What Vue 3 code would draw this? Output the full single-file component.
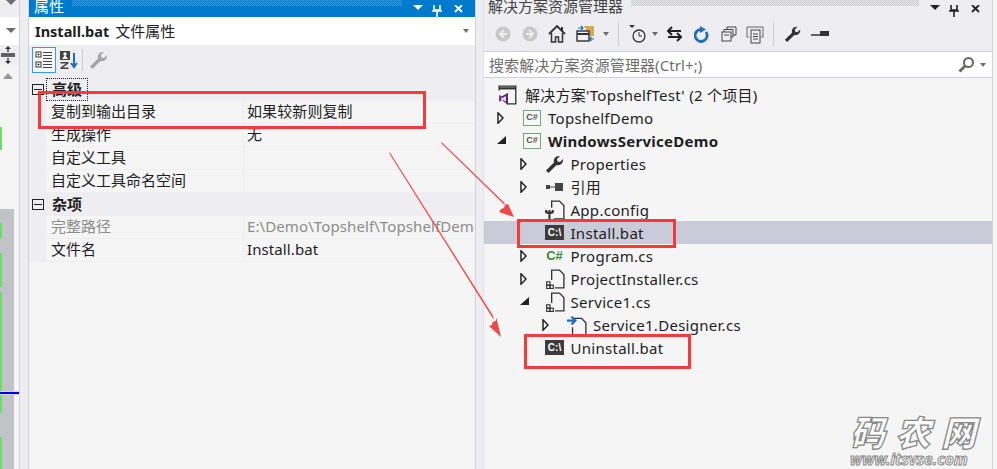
<script setup>
const mapSegments = [
  { h: 85, c: 'transparent' }, { h: 42, c: '#f5f5f5' }, { h: 23, c: 'green' }, { h: 59, c: '#f5f5f5' },
  { h: 14, c: 'gray' }, { h: 15, c: 'green' }, { h: 15, c: 'gray' }, { h: 34, c: 'green' }, { h: 5, c: 'gray' },
  { h: 121, c: 'green' }, { h: 24, c: 'gray' }, { h: 32, c: 'green' }
]
const propGroups = [
  { name: '高级', focus: true, rows: [
    { k: '复制到输出目录', v: '如果较新则复制' }, { k: '生成操作', v: '无' },
    { k: '自定义工具', v: '' }, { k: '自定义工具命名空间', v: '' } ] },
  { name: '杂项', rows: [
    { k: '完整路径', v: 'E:\\Demo\\Topshelf\\TopshelfDemo\\WindowsServiceDemo\\Install.bat', dim: true },
    { k: '文件名', v: 'Install.bat' } ] }
]
const tree = [
  { t: "解决方案'TopshelfTest' (2 个项目)", icon: 'sln', solution: true, d: 0 },
  { t: 'TopshelfDemo', icon: 'proj', arrow: 'o', d: 0 },
  { t: 'WindowsServiceDemo', icon: 'proj', arrow: 'f', d: 0, bold: true },
  { t: 'Properties', icon: 'wrench', arrow: 'o', d: 1 },
  { t: '引用', icon: 'ref', arrow: 'o', d: 1 },
  { t: 'App.config', icon: 'config', d: 1 },
  { t: 'Install.bat', icon: 'cmd', d: 1, sel: true },
  { t: 'Program.cs', icon: 'cs', arrow: 'o', d: 1 },
  { t: 'ProjectInstaller.cs', icon: 'comp', arrow: 'o', d: 1 },
  { t: 'Service1.cs', icon: 'comp', arrow: 'f', d: 1 },
  { t: 'Service1.Designer.cs', icon: 'des', arrow: 'o', d: 2 },
  { t: 'Uninstall.bat', icon: 'cmd', d: 1 }
]
</script>

<template>
  <div class="root">
    <aside class="strip">
      <div class="strip-main">
        <div class="s-top"><i class="tri"></i></div>
        <div class="s-combo"><i class="tri"></i></div>
        <div class="s-split">
          <svg width="16" height="18" viewBox="0 0 16 18"><path d="M1 8h14M1 10h14" stroke="#333" stroke-width="1.4"/><path d="M8 1v5M8 12v5" stroke="#333" stroke-width="1.4"/><path d="M5 3l3-3 3 3zM5 15l3 3 3-3z" fill="#333"/></svg>
        </div>
        <div class="s-map">
          <i class="tri up"></i>
          <div v-for="(s, i) in mapSegments" :key="i" class="seg" :class="s.c === 'green' ? 'seg-green' : s.c === 'gray' ? 'seg-gray' : ''" :style="{ height: s.h + 'px' }"></div>
        </div>
      </div>
      <div class="strip-bar"></div>
      <div class="caret-line"></div>
    </aside>

    <section class="props">
      <header class="title blue">
        <span class="title-text">属性</span>
        <span class="grip"></span>
        <span class="win-btns">
          <svg width="60" height="12" viewBox="0 0 60 12"><path d="M5 0h10l-5 5z" fill="#fff"/><path d="M26 0v5h6V0M24 6h10M29 6v6" stroke="#fff" stroke-width="1.6" fill="none"/><path d="M47 0l7 7M54 0l-7 7" stroke="#fff" stroke-width="1.8"/></svg>
        </span>
      </header>
      <div class="file-head">
        <b>Install.bat</b><span>文件属性</span>
        <i class="tri small"></i>
      </div>
      <div class="p-tools">
        <button class="tool on">
          <svg width="18" height="18" viewBox="0 0 18 18"><rect x="1" y="1" width="5" height="5" fill="#fff" stroke="#333"/><path d="M2.5 3.5h2M3.5 2.5v2" stroke="#333"/><rect x="1" y="11" width="5" height="5" fill="#fff" stroke="#333"/><path d="M2.5 13.5h2M3.5 12.5v2" stroke="#333"/><path d="M8 1.5h9M8 4.5h9M8 7.5h9M8 10.5h9M8 13.5h9M8 16.5h9" stroke="#444"/></svg>
        </button>
        <span class="tool plain">
          <svg width="19" height="20" viewBox="0 0 19 20"><rect x="1" y="1" width="10" height="9" fill="#444"/><circle cx="6" cy="4" r="1.7" fill="#fff"/><path d="M3 9l3-4 3 4z" fill="#fff"/><path d="M1.5 12h8v1.5l-5.5 4h5.5v1.5h-8v-1.500l5.500-4h-5.500z" fill="#444"/><path d="M15 3v14M12 13l3 4 3-4" stroke="#1c6fb8" stroke-width="2" fill="none"/></svg>
        </span>
        <span class="tsep"></span>
        <span class="tool plain wr">
          <svg width="20" height="20" viewBox="0 0 20 20"><path d="M1 16.500L9 8.500C8 5 10.500 1.500 15 2l-3 3 .5 2.500L15 8l3-3c.5 4.500-3 7-6.500 6l-8 8z" fill="#a6a6a6"/></svg>
        </span>
      </div>
      <template v-for="g in propGroups" :key="g.name">
        <div class="group">
          <span class="minus"></span>
          <span class="g-name" :class="{ focus: g.focus }">{{ g.name }}</span>
        </div>
        <div v-for="r in g.rows" :key="r.k" class="prop-row">
          <span class="k" :class="{ dim: r.dim }">{{ r.k }}</span>
          <span class="v" :class="{ dim: r.dim }">{{ r.v }}</span>
        </div>
      </template>
    </section>

    <div class="gutter"></div>

    <section class="explorer">
      <header class="title light">
        <span class="title-text">解决方案资源管理器</span>
        <span class="grip dark"></span>
        <span class="win-btns">
          <svg width="60" height="12" viewBox="0 0 60 12"><path d="M5 0h10l-5 5z" fill="#222"/><path d="M26 0v5h6V0M24 6h10M29 6v6" stroke="#222" stroke-width="1.6" fill="none"/><path d="M47 0l7 7M54 0l-7 7" stroke="#222" stroke-width="1.8"/></svg>
        </span>
      </header>
      <div class="e-tools">
        <svg class="e-ico back" width="16" height="16" viewBox="0 0 16 16"><circle cx="8" cy="8" r="7.500" fill="#c8c8c8"/><path d="M9 4L5 8l4 4M5 8h7" stroke="#eee" stroke-width="1.800" fill="none"/></svg>
        <svg class="e-ico fwd" width="16" height="16" viewBox="0 0 16 16"><circle cx="8" cy="8" r="7.500" fill="#c8c8c8"/><path d="M7 4l4 4-4 4M11 8H4" stroke="#eee" stroke-width="1.800" fill="none"/></svg>
        <svg class="e-ico home" width="18" height="18" viewBox="0 0 18 18"><path d="M1 9l8-8 8 8" fill="none" stroke="#333" stroke-width="1.800"/><path d="M3.500 8v9h4v-5h3v5h4V8" fill="#eeeef2" stroke="#333" stroke-width="1.500"/><rect x="13" y="2" width="2" height="4" fill="#333"/></svg>
        <svg class="e-ico sync" width="19" height="18" viewBox="0 0 19 18"><path d="M8 1h10v10h-5" fill="#d9a84e"/><rect x="1" y="6" width="12" height="10" fill="#eeeef2" stroke="#333" stroke-width="1.400"/><path d="M1 9h12" stroke="#333" stroke-width="2"/><path d="M2 3h5M5 1l2 2-2 2" stroke="#1c6fb8" stroke-width="1.200" fill="none"/><path d="M18 14h-4M15.500 12l-2 2 2 2" stroke="#1c6fb8" stroke-width="1.200" fill="none"/></svg>
        <i class="tri small t1"></i>
        <span class="tsep e1"></span>
        <svg class="e-ico hist" width="17" height="18" viewBox="0 0 17 18"><path d="M0 0h6L3 3z" fill="#333"/><circle cx="10" cy="11" r="6" fill="none" stroke="#333" stroke-width="1.300"/><path d="M10 7v4h3" stroke="#333" fill="none"/></svg>
        <i class="tri small t2"></i>
        <svg class="e-ico swap" width="15" height="16" viewBox="0 0 15 16"><path d="M1 5h13M5 1L1 5l4 4" stroke="#222" stroke-width="2" fill="none"/><path d="M14 11H1M10 7l4 4-4 4" stroke="#222" stroke-width="2" fill="none"/></svg>
        <svg class="e-ico ref" width="15" height="17" viewBox="0 0 15 17"><path d="M12 6a6 6 0 1 1-5.500-2.500" fill="none" stroke="#1c6fb8" stroke-width="2.800"/><path d="M6 0l6 3.500L6 7z" fill="#1c6fb8"/></svg>
        <svg class="e-ico coll" width="16" height="16" viewBox="0 0 16 16"><rect x="1" y="6" width="9" height="9" fill="#eeeef2" stroke="#444"/><path d="M3 6V3.500h9V11h-2M6 3.500V1h9v8h-3" fill="none" stroke="#444"/><path d="M3 9h5" stroke="#444"/></svg>
        <svg class="e-ico paste" width="18" height="19" viewBox="0 0 18 19"><path d="M3 12H1V2h16v10h-2" fill="none" stroke="#666"/><rect x="5" y="5" width="9" height="13" fill="#eeeef2" stroke="#444"/><path d="M7 9h5M7 11.500h5M7 14h5" stroke="#444"/></svg>
        <span class="tsep e2"></span>
        <svg class="e-ico wrench" width="18" height="18" viewBox="0 0 20 20"><path d="M1 16.500L9 8.500C8 5 10.500 1.500 15 2l-3 3 .5 2.500L15 8l3-3c.5 4.500-3 7-6.500 6l-8 8z" fill="#333"/></svg>
        <svg class="e-ico dash" width="18" height="6" viewBox="0 0 18 6"><path d="M0 4h9" stroke="#333" stroke-width="1.500"/><rect x="9" y="0" width="9" height="5" fill="#333"/></svg>
      </div>
      <div class="search">
        <span class="ph">搜索解决方案资源管理器(Ctrl+;)</span>
        <svg class="mag" width="17" height="17" viewBox="0 0 17 17"><circle cx="10.500" cy="6.500" r="4.500" fill="none" stroke="#666" stroke-width="2"/><path d="M7 10l-5.500 5.500" stroke="#666" stroke-width="2.800"/></svg>
        <i class="tri small t3"></i>
      </div>
      <div class="tree">
        <div v-for="n in tree" :key="n.t" class="node" :class="{ sel: n.sel, bold: n.bold, sol: n.solution }" :style="{ paddingLeft: (n.solution ? 14 : 10 + n.d * 22.5) + 'px' }">
          <span class="arrow">
            <svg v-if="n.arrow === 'o'" width="7" height="12" viewBox="0 0 7 12"><path d="M1 .8v10.400L6 6z" fill="#fff" stroke="#222" stroke-width="1.500"/></svg>
            <svg v-else-if="n.arrow === 'f'" width="9" height="9" viewBox="0 0 9 9"><path d="M9 0v8H0z" fill="#222"/></svg>
          </span>
          <span class="icon">
            <svg v-if="n.icon === 'sln'" width="20" height="20" viewBox="0 0 18 18"><path d="M1 5V1h15v16H8" fill="none" stroke="#333" stroke-width="1.200"/><path d="M1 3h15" stroke="#333" stroke-width="2"/><path d="M1 9v6l2-1v-4zM9 7v11l-5-4 0-1 3 2V10L4 12 2 11z" fill="#68217a"/></svg>
            <span v-else-if="n.icon === 'proj'" class="proj">C#</span>
            <svg v-else-if="n.icon === 'wrench'" width="20" height="20" viewBox="0 0 20 20"><path d="M1 16.500L9 8.500C8 5 10.500 1.500 15 2l-3 3 .5 2.500L15 8l3-3c.5 4.500-3 7-6.500 6l-8 8z" fill="#333"/></svg>
            <svg v-else-if="n.icon === 'ref'" width="18" height="8" viewBox="0 0 18 8"><rect x="0" y="2" width="4" height="4" fill="#444"/><path d="M4 4h5" stroke="#444"/><rect x="9" y="0" width="8" height="8" fill="#444"/></svg>
            <svg v-else-if="n.icon === 'config'" width="20" height="20" viewBox="0 0 18 18"><path d="M6 7V1h7l4 4v12H8" fill="none" stroke="#333" stroke-width="1.200"/><path d="M4 9v2.500M4 17v-5.500M1 9v2l3 1 3-1V9" fill="none" stroke="#333" stroke-width="1.900"/></svg>
            <span v-else-if="n.icon === 'cmd'" class="cmd">C:\</span>
            <span v-else-if="n.icon === 'cs'" class="cs">C#</span>
            <svg v-else-if="n.icon === 'comp'" width="20" height="20" viewBox="0 0 18 18"><path d="M6 10V1h7l4 4v12H9" fill="none" stroke="#333" stroke-width="1.200"/><rect x="1.500" y="11.500" width="3" height="3" fill="none" stroke="#333"/><rect x="4.500" y="14.500" width="3" height="3" fill="none" stroke="#333"/><rect x="1.500" y="14.500" width="3" height="3" fill="none" stroke="#333"/></svg>
            <svg v-else-if="n.icon === 'des'" width="20" height="20" viewBox="0 0 18 18"><path d="M6 7V3h7l4 4v11H5V11" fill="none" stroke="#333" stroke-width="1.200"/><path d="M0 5h7M4 1.500L7.500 5 4 8.500" stroke="#1c6fb8" stroke-width="2" fill="none"/></svg>
          </span>
          <span class="label">{{ n.t }}</span>
        </div>
      </div>
    </section>
    <div class="edge"></div>

    <svg class="marks" width="997" height="469" viewBox="0 0 997 469">
      <g fill="none" stroke="#f63a3a" stroke-width="3">
        <rect x="39.500" y="92.500" width="385" height="35"/>
        <rect x="518.500" y="220.500" width="156" height="26"/>
        <rect x="525.500" y="335.500" width="164" height="32"/>
      </g>
      <path d="M441 143l.8-.8 62 60 1.600 3.600zM389 153l.9-.5 103 163 1 4.500z" fill="#f04848"/>
      <path d="M514 217l-15-5 2-3 3-1 1-3 3-1zM501 337l-12-11 3-1 .5-3 3-1 1-3z" fill="#f04848"/>
    </svg>

    <div class="watermark">
      <div class="wm-cn"><span>码</span><span>农</span><span>网</span></div>
      <div class="wm-en">www.itsvse.com</div>
    </div>
  </div>
</template>

<style scoped>
.root { position: relative; width: 997px; height: 469px; overflow: hidden; display: flex; background: #f5f5f5; font: 15px/22px "Noto Sans", "Noto Sans CJK SC", sans-serif; color: #1e1e1e; }
.tri { display: block; width: 0; height: 0; border-left: 5px solid transparent; border-right: 5px solid transparent; border-top: 5px solid #6d6d6d; }
.tri.up { border-top: 0; border-bottom: 6px solid #999; position: absolute; left: 2px; top: 73px; }
.tri.small { border-left-width: 3.500px; border-right-width: 3.500px; border-top-width: 4px; }

.strip { position: relative; width: 29px; flex: none; display: flex; }
.strip-main { width: 19px; flex: none; position: relative; background: #f5f5f5; border-right: 1px solid #cfd0d8; box-sizing: content-box; }
.strip-bar { flex: 1; background: #eeeef2; border-right: 1px solid #cfd0d8; }
.s-top { height: 17px; background: #eeeef2; padding: 0 0 0 6px; box-sizing: border-box; }
.s-combo { height: 28px; background: #fff; padding: 11px 0 0 6px; box-sizing: border-box; }
.s-split { height: 20px; background: #eeeef2; padding: 1px 0 0 0; box-sizing: border-box; }
.s-map { position: absolute; left: 0; top: 0; width: 14px; padding-top: 0; pointer-events: none; }
.s-map .tri.up { left: 3px; }
.seg { width: 100%; }
.seg-gray { background: #c2c3c9; }
.seg-green { background: linear-gradient(90deg, #6cdc6c 0 2px, transparent 2px); }
.seg-green:nth-child(n+6) { background: linear-gradient(90deg, #6cdc6c 0 2px, #c2c3c9 2px); }
.caret-line { position: absolute; left: 0; top: 392px; width: 19px; height: 2px; background: #0000d8; box-shadow: 0 -1px #d5d6e8, 0 1px #d5d6e8; }

.props { width: 447px; flex: none; display: flex; flex-direction: column; border-right: 1px solid #cfd0d8; overflow: hidden; box-sizing: border-box; }
.title { height: 17px; flex: none; display: flex; align-items: flex-end; overflow: hidden; }
.title.blue { background: #007acc; color: #fff; padding-left: 5px; }
.title.light { background: #eeeef2; color: #444; padding-left: 4px; }
.title-text { flex: none; white-space: nowrap; height: 22px; font-size: 15px; line-height: 22px; }
.grip { flex: 1; align-self: flex-start; height: 6px; margin: 0 6px 0 8px; background: repeating-conic-gradient(#3c9ad8 0 25%, transparent 0 50%) 0 0 / 2px 2px; }
.grip.dark { background: repeating-conic-gradient(#c6c6ca 0 25%, transparent 0 50%) 0 0 / 2px 2px; }
.win-btns { flex: none; width: 67px; align-self: flex-start; height: 12px; }
.file-head { height: 28px; flex: none; background: #fff; display: flex; align-items: center; padding: 0 6px 0 6px; gap: 6px; font-size: 15px; }
.file-head b { font-weight: 700; font-size: 14.500px; }
.file-head .tri { margin-left: auto; }
.p-tools { height: 31px; flex: none; background: #eeeef2; display: flex; align-items: flex-start; padding: 2px 0 0 3px; }
.tool { display: flex; align-items: center; justify-content: center; padding: 0; }
.tool.on { width: 24px; height: 26px; border: 1px solid #3399ff; background: #f8f8fb; box-sizing: border-box; }
.tool.plain { width: 24px; height: 26px; }
.tsep { width: 1px; height: 22px; background: #ccced6; margin: 2px 0 0 2px; }
.tool.wr { margin-left: 4px; }
.group { height: 23px; flex: none; background: #eeeef2; display: flex; align-items: center; font-weight: 700; padding-left: 3px; }
.minus { width: 12px; height: 11px; border: 1px solid #222; box-sizing: border-box; margin-right: 2px; flex: none; background: linear-gradient(#222, #222) center / 8px 1px no-repeat; }
.g-name { padding: 0 5px; line-height: 20px; height: 21px; border: 1px solid transparent; }
.g-name.focus { border: 1px dotted #222; }
.prop-row { height: 23px; flex: none; display: flex; background: #eeeef2; padding-left: 17px; box-sizing: border-box; line-height: 20px; }
.k { width: 198px; flex: none; padding-left: 5px; background: #f5f5f5; box-sizing: border-box; border-bottom: 1px solid #eeeef2; border-right: 1px solid #eeeef2; white-space: nowrap; }
.v { flex: 1; padding-left: 3px; background: #f5f5f5; border-bottom: 1px solid #eeeef2; white-space: nowrap; overflow: hidden; letter-spacing: .1px; }
.dim { color: #8c8c8c; }

.gutter { width: 8px; flex: none; background: #eeeef2; border-right: 1px solid #e0e0e6; box-sizing: border-box; }
.explorer { width: 508px; flex: none; display: flex; flex-direction: column; }
.edge { width: 1px; flex: none; background: #cfd0d8; }
.e-tools { height: 34px; flex: none; background: #eeeef2; display: flex; align-items: center; padding: 0 0 0 11px; }
.e-ico { flex: none; }
.fwd { margin-left: 11px; }
.home { margin-left: 10px; }
.sync { margin-left: 10px; }
.t1 { margin-left: 8px; }
.e1 { height: 24px; margin: 0 0 0 9px; align-self: center; }
.hist { margin-left: 10px; }
.t2 { margin-left: 6px; }
.swap { margin-left: 9px; }
.ref { margin-left: 12px; }
.coll { margin-left: 12px; }
.paste { margin-left: 9px; }
.e2 { height: 24px; margin: 0 0 0 9px; align-self: center; }
.wrench { margin-left: 10px; }
.dash { margin-left: 9px; }
.search { height: 27px; flex: none; background: #fff; border: solid #cccedb; border-width: 1px 0; box-sizing: border-box; display: flex; align-items: center; padding: 0 6px 0 5px; }
.ph { color: #6d6d6d; flex: 1; white-space: nowrap; letter-spacing: .1px; }
.mag { margin-right: 5px; }
.tree { flex: 1; padding-top: 5px; background: #f5f5f5; }
.node { height: 23px; display: flex; align-items: center; white-space: nowrap; }
.node.sel { background: #c9cbd9; }
.label { letter-spacing: .28px; }
.node.bold .label { font-weight: 700; }
.arrow { width: 28px; flex: none; display: flex; align-items: center; padding-left: 3px; box-sizing: border-box; }
.sol .arrow { display: none; }
.icon { width: 20px; height: 20px; flex: none; margin-right: 6px; display: flex; align-items: center; justify-content: center; }
.sol .icon { margin-right: 7px; }
.proj { width: 18px; height: 16px; border: 1.500px solid #71a876; box-sizing: border-box; background: #f7f7f7; font: 700 9px/13px "Liberation Sans", sans-serif; color: #555; text-align: center; }
.cmd { width: 19px; height: 15px; background: #3c3c3c; color: #fff; font: 700 10px/15px "Liberation Sans", sans-serif; text-align: center; }
.cs { font: 700 13px/14px "Liberation Sans", sans-serif; color: #388a34; }
.marks { position: absolute; left: 0; top: 0; pointer-events: none; }
.watermark { position: absolute; left: 850px; top: 410px; width: 128px; color: #fafafa; -webkit-text-stroke: 1.300px #8a8a8a; }
.wm-cn { display: flex; justify-content: space-between; font: italic 900 35px/42px "Noto Sans CJK SC", sans-serif; padding-right: 2px; }
.wm-en { font: italic 700 15.500px/15px "Noto Sans", sans-serif; white-space: nowrap; -webkit-text-stroke: 1px #8a8a8a; }
</style>
